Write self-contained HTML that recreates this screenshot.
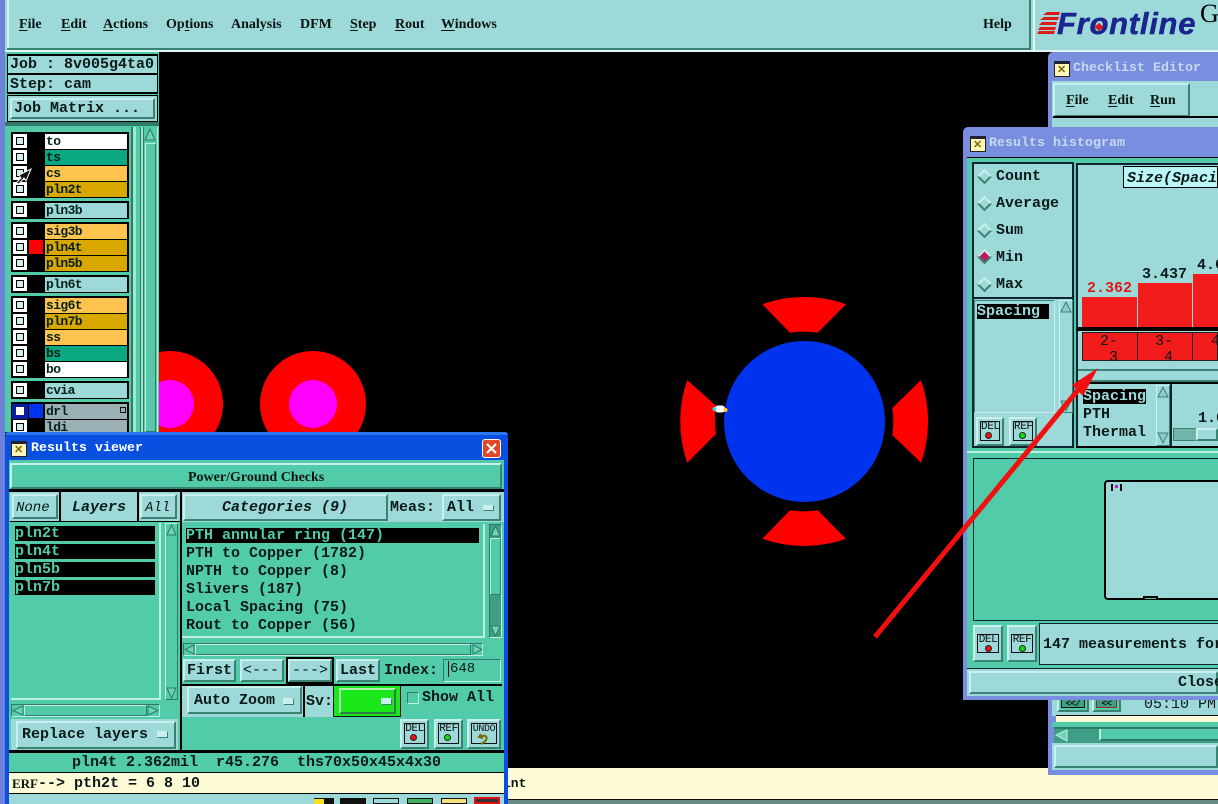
<!DOCTYPE html>
<html><head><meta charset="utf-8"><style>
html,body{margin:0;padding:0;width:1218px;height:804px;overflow:hidden;background:#000}
div,span{position:absolute;box-sizing:border-box}
.t{white-space:pre;font:bold 15px/18px "Liberation Mono",monospace;color:#0a1a18;height:18px}
.s{white-space:pre;font:bold 14px/18px "Liberation Serif",serif;color:#0a1510;height:18px}
.s u,.t u{position:static;text-underline-offset:2px}
.l{background:#9dd9d9}.g{background:#52cca8}.k{background:#000}
.b{background:#9dd9d9;border:2px solid;border-color:#c8f0ec #3a8272 #3a8272 #c8f0ec}
.r{height:15px;left:45px;width:82px;font:bold 13px/16px "Liberation Mono",monospace;letter-spacing:-.6px;color:#052018;padding-left:1px;white-space:pre}
.c{left:13px;width:14px;height:14px;border:3px solid #fff;background:#000}
.c:after{content:"";position:absolute;left:1px;top:1px;width:6px;height:6px;background:#d0eeee}
.gr{left:11px;width:118px;background:#000}
.ic{border:2px solid;border-color:#c8f0ec #3a8272 #3a8272 #c8f0ec;background:#9dd9d9}
.ic i{position:absolute;left:2px;top:2px;right:2px;bottom:3px;border:1px solid #111;font:normal 11px/11px "Liberation Mono",monospace;letter-spacing:-.4px;text-align:center;color:#111;display:block;overflow:hidden}
.dot{width:7px;height:7px;border-radius:50%;border:1px solid #222}
.dia{width:11px;height:11px;transform:rotate(45deg);background:#9dd9d9;border:2px solid;border-color:#c8f0ec #3a8272 #3a8272 #c8f0ec}
</style></head><body>

<!-- desktop left strip and top bar -->
<div style="left:0;top:0;width:5px;height:804px;background:#6f80d8"></div>
<div class="l" style="left:5px;top:0;width:1213px;height:52px"></div>
<div style="left:7px;top:0;width:2px;height:48px;background:#d8f4f2"></div>
<div style="left:7px;top:48px;width:1024px;height:2px;background:#3a8272"></div>
<div style="left:5px;top:50px;width:1213px;height:2px;background:#e4f6f4"></div>
<div style="left:1029px;top:0;width:2px;height:50px;background:#3a8272"></div>
<div style="left:1033px;top:0;width:2px;height:50px;background:#e4f6f4"></div>

<div class="s" style="left:19px;top:16px"><u>F</u>ile</div>
<div class="s" style="left:61px;top:16px"><u>E</u>dit</div>
<div class="s" style="left:103px;top:16px"><u>A</u>ctions</div>
<div class="s" style="left:166px;top:16px">Op<u>t</u>ions</div>
<div class="s" style="left:231px;top:16px">Analysis</div>
<div class="s" style="left:300px;top:16px">DFM</div>
<div class="s" style="left:350px;top:16px"><u>S</u>tep</div>
<div class="s" style="left:395px;top:16px"><u>R</u>out</div>
<div class="s" style="left:441px;top:16px"><u>W</u>indows</div>
<div class="s" style="left:983px;top:16px">Help</div>

<!-- logo -->
<svg style="position:absolute;left:1036px;top:10px" width="30" height="28"><g fill="#e01818"><polygon points="11,2 24,2 23,5 7,5"/><polygon points="8,7 23,7 22,10 4,10"/><polygon points="6,12 21,12 20,15 3,15"/><polygon points="4,17 20,17 19,20 2,20"/><polygon points="3,21 19,21 18,24 1,24"/></g></svg>
<div style="left:1057px;top:6px;font:italic bold 31px/36px 'Liberation Sans',sans-serif;color:#1a2590;letter-spacing:.73px;white-space:pre;-webkit-text-stroke:.5px #1a2590">Frontline</div>
<div style="left:1096px;top:24px;width:6px;height:6px;background:#e01818;transform:rotate(45deg)"></div>
<div style="left:1200px;top:-1px;font:26px/30px 'Liberation Serif',serif;color:#000">G</div>

<!-- canvas shapes -->
<svg style="position:absolute;left:0;top:0" width="1218" height="804">
<circle cx="170" cy="404" r="53" fill="#f00"/><circle cx="170" cy="404" r="24" fill="#f0f"/>
<circle cx="313" cy="404" r="53" fill="#f00"/><circle cx="313" cy="404" r="24" fill="#f0f"/>
<circle cx="804.5" cy="421.5" r="80.5" fill="#0033ee"/>
<g fill="#f00">
<path d="M762.3 304.3A124.5 124.5 0 0 1 846 304.3L817.7 332.7A90 90 0 0 0 790 332.7Z"/>
<path d="M762.3 538.7A124.5 124.5 0 0 0 846 538.7L817.7 510.3A90 90 0 0 1 790 510.3Z"/>
<path d="M687.3 380A124.5 124.5 0 0 0 687.3 462.7L716 434A90 90 0 0 1 716 405.7Z"/>
<path d="M921 380A124.5 124.5 0 0 1 921 462.7L892.3 435A90 90 0 0 0 892.3 408Z"/>
</g>
<rect x="715" y="405.500" width="10" height="7" rx="3" fill="#fff"/>
<circle cx="714.500" cy="409" r="2" fill="#3dd"/><circle cx="725.500" cy="410" r="2" fill="#fc2"/>
</svg>

<!-- left panel -->
<div class="g" style="left:5px;top:52px;width:154px;height:380px"></div>
<div class="k" style="left:7px;top:54px;width:151px;height:40px"></div>
<div class="l" style="left:8px;top:56px;width:149px;height:17px"></div>
<div class="l" style="left:8px;top:75px;width:149px;height:17px"></div>
<div class="t" style="left:10px;top:56px">Job : 8v005g4ta0</div>
<div class="t" style="left:10px;top:76px">Step: cam</div>
<div class="k" style="left:7px;top:95px;width:151px;height:27px"></div>
<div class="l" style="left:8px;top:96px;width:149px;height:25px"></div>
<div class="b" style="left:10px;top:98px;width:145px;height:21px"></div>
<div class="t" style="left:14px;top:100px">Job Matrix ...</div>
<div style="left:5px;top:122px;width:154px;height:4px;background:#2f7a68"></div>

<div class="gr" style="top:132px;height:66px"></div>
<div class="gr" style="top:201px;height:18px"></div>
<div class="gr" style="top:222px;height:50px"></div>
<div class="gr" style="top:275px;height:18px"></div>
<div class="gr" style="top:296px;height:82px"></div>
<div class="gr" style="top:381px;height:18px"></div>
<div class="gr" style="top:402px;height:30px"></div>

<div class="c" style="top:134px"></div><div class="r" style="top:134px;background:#fff">to</div>
<div class="c" style="top:150px"></div><div class="r" style="top:150px;background:#0aa882">ts</div>
<div class="c" style="top:166px"></div><div class="r" style="top:166px;background:#ffc44f">cs</div>
<div class="c" style="top:182px"></div><div class="r" style="top:182px;background:#d8a800">pln2t</div>
<div class="c" style="top:203px"></div><div class="r" style="top:203px;background:#9dd9d9">pln3b</div>
<div class="c" style="top:224px"></div><div class="r" style="top:224px;background:#ffc44f">sig3b</div>
<div class="c" style="top:240px"></div><div class="r" style="top:240px;background:#d8a800">pln4t</div>
<div style="left:29px;top:240px;width:14px;height:14px;background:#f00"></div>
<div class="c" style="top:256px"></div><div class="r" style="top:256px;background:#d8a800">pln5b</div>
<div class="c" style="top:277px"></div><div class="r" style="top:277px;background:#9dd9d9">pln6t</div>
<div class="c" style="top:298px"></div><div class="r" style="top:298px;background:#ffc44f">sig6t</div>
<div class="c" style="top:314px"></div><div class="r" style="top:314px;background:#d8a800">pln7b</div>
<div class="c" style="top:330px"></div><div class="r" style="top:330px;background:#ffc44f">ss</div>
<div class="c" style="top:346px"></div><div class="r" style="top:346px;background:#0aa882">bs</div>
<div class="c" style="top:362px"></div><div class="r" style="top:362px;background:#fff">bo</div>
<div class="c" style="top:383px"></div><div class="r" style="top:383px;background:#9dd9d9">cvia</div>
<div style="left:12px;top:404px;width:16px;height:15px;background:#0a1fa0"></div>
<div style="left:16px;top:407px;width:8px;height:8px;background:#fff"></div>
<div style="left:29px;top:404px;width:14px;height:14px;background:#0033ee"></div>
<div class="r" style="top:404px;background:#9ab0b4">drl</div>
<div style="left:120px;top:407px;width:6px;height:6px;border:1px solid #111"></div>
<div class="c" style="top:420px"></div><div class="r" style="top:420px;background:#9ab0b4;height:12px">ldi</div>
<svg style="position:absolute;left:15px;top:167px" width="18" height="18"><path d="M1 16L6 11 4 8 16 2 11 14 9 11 4 17Z" fill="#111" stroke="#fff" stroke-width="1"/></svg>

<!-- left scroll strip -->
<div style="left:131px;top:127px;width:12px;height:305px;background:linear-gradient(90deg,#2f7a68 0 2px,#9fe8d0 2px 5px,#52cca8 5px 9px,#2f7a68 9px 10px,#9fe8d0 10px)"></div>
<div style="left:143px;top:127px;width:15px;height:305px;background:#52cca8;border-left:1px solid #2f7a68;border-right:1px solid #bcefe0"></div>
<div style="left:145px;top:143px;width:11px;height:289px;background:#5ac8a8;border:1px solid;border-color:#bcefe0 #2f7a68 #2f7a68 #bcefe0"></div>
<svg style="position:absolute;left:144px;top:128px" width="13" height="13"><path d="M1 12L6 1 11 12Z" fill="#6fd4b6" stroke="#2f7a68"/></svg>

<!-- bottom cream -->
<div style="left:507px;top:768px;width:711px;height:31px;background:#fffbd6"></div>
<div style="left:507px;top:799px;width:711px;height:1px;background:#111"></div>
<div style="left:507px;top:800px;width:711px;height:4px;background:#6b8c84"></div>
<div class="t" style="left:503px;top:775px;font-size:13px">int</div>

<!-- checklist window -->
<div style="left:1048px;top:52px;width:180px;height:723px;background:#7a8ee0;border-radius:5px 0 0 0"></div>
<div style="left:1054px;top:61px;width:16px;height:16px;background:#fdf6b8;border:1px solid #222;border-top:3px solid #223"></div>
<div style="left:1057px;top:66px;font:bold 11px/9px 'Liberation Sans',sans-serif;color:#7a6a00">✕</div>
<div class="t" style="left:1073px;top:60px;color:#c6d8ee;font-size:13.330px">Checklist Editor</div>
<div class="l" style="left:1052px;top:81px;width:166px;height:36px"></div>
<div class="b" style="left:1053px;top:83px;width:137px;height:34px"></div>
<div class="k" style="left:1053px;top:116px;width:165px;height:2px"></div>
<div class="s" style="left:1066px;top:92px"><u>F</u>ile</div>
<div class="s" style="left:1108px;top:92px"><u>E</u>dit</div>
<div class="s" style="left:1150px;top:92px"><u>R</u>un</div>
<div class="l" style="left:1052px;top:118px;width:166px;height:14px"></div>
<div class="l" style="left:1052px;top:695px;width:166px;height:21px"></div>
<div class="ic" style="left:1057px;top:696px;width:32px;height:16px;background:#52cca8"><i style="left:2px;top:0;right:2px;bottom:2px;background:#3e9f85;font:bold 9px/10px 'Liberation Mono',monospace">&lt;&lt;/</i></div>
<div class="ic" style="left:1092px;top:696px;width:29px;height:16px;background:#52cca8"><i style="left:2px;top:0;right:2px;bottom:2px;background:#3e9f85;border-color:#a22;font:bold 9px/10px 'Liberation Mono',monospace">&lt;&lt;</i></div>
<div class="t" style="left:1144px;top:696px;font-weight:normal">05:10 PM</div>
<div style="left:1056px;top:715px;width:162px;height:1px;background:#111"></div>
<div style="left:1056px;top:716px;width:162px;height:6px;background:#fffbd6"></div>
<div style="left:1052px;top:722px;width:166px;height:5px;background:#52cca8"></div>
<div style="left:1054px;top:727px;width:164px;height:16px;background:#3e9f85;border-top:2px solid #2f7a68"></div>
<div style="left:1099px;top:729px;width:119px;height:12px;background:#52cca8;border-left:2px solid #bcefe0;border-bottom:2px solid #2f7a68"></div>
<svg style="position:absolute;left:1055px;top:729px" width="13" height="13"><path d="M12 1L1 6 12 12Z" fill="#6fd4b6" stroke="#bcefe0"/></svg>
<div class="l" style="left:1052px;top:743px;width:166px;height:27px"></div>
<div class="b" style="left:1054px;top:745px;width:164px;height:23px"></div>

<!-- histogram window -->
<div style="left:963px;top:127px;width:255px;height:573px;background:#7a8ee0;border-radius:5px 0 0 0"></div>
<div style="left:970px;top:136px;width:16px;height:16px;background:#fdf6b8;border:1px solid #222;border-top:3px solid #223"></div>
<div style="left:973px;top:141px;font:bold 11px/9px 'Liberation Sans',sans-serif;color:#7a6a00">✕</div>
<div class="t" style="left:989px;top:135px;color:#c6d8ee;font-size:13.330px">Results histogram</div>
<div class="g" style="left:967px;top:157px;width:251px;height:294px"></div>
<div class="k" style="left:967px;top:157px;width:251px;height:1px"></div>
<div class="l" style="left:972px;top:162px;width:102px;height:286px;border:2px solid #123"></div>
<div style="left:974px;top:297px;width:98px;height:2px;background:#123"></div>
<div class="t" style="left:996px;top:168px">Count</div>
<div class="t" style="left:996px;top:195px">Average</div>
<div class="t" style="left:996px;top:222px">Sum</div>
<div class="t" style="left:996px;top:249px">Min</div>
<div class="t" style="left:996px;top:276px">Max</div>
<div class="dia" style="left:979px;top:171px"></div>
<div class="dia" style="left:979px;top:198px"></div>
<div class="dia" style="left:979px;top:225px"></div>
<div class="dia" style="left:979px;top:251px;background:#b81a5a"></div>
<div class="dia" style="left:979px;top:279px"></div>
<!-- left list -->
<div style="left:974px;top:300px;width:81px;height:113px;border:1px solid;border-color:#3a8272 #c8f0ec #c8f0ec #3a8272"></div>
<div class="k" style="left:977px;top:304px;width:72px;height:15px"></div>
<div class="t" style="left:977px;top:303px;color:#9dd9d9">Spacing</div>
<div style="left:1059px;top:300px;width:14px;height:113px;background:#9dd9d9;border:1px solid;border-color:#c8f0ec #3a8272 #3a8272 #c8f0ec"></div>
<svg style="position:absolute;left:1060px;top:301px" width="12" height="12"><path d="M1 11L6 1 11 11Z" fill="#8ccccc" stroke="#3a8272"/></svg>
<svg style="position:absolute;left:1060px;top:400px" width="12" height="12"><path d="M1 1L6 11 11 1Z" fill="#8ccccc" stroke="#3a8272"/></svg>
<div class="ic" style="left:976px;top:417px;width:28px;height:29px"><i>DEL</i></div><div class="dot" style="left:985px;top:432px;background:#f01010"></div>
<div class="ic" style="left:1009px;top:417px;width:28px;height:29px"><i>REF</i></div><div class="dot" style="left:1019px;top:432px;background:#10e010"></div>
<!-- chart -->
<div class="l" style="left:1076px;top:163px;width:142px;height:285px;border-left:2px solid #123;border-top:2px solid #123"></div>
<div style="left:1123px;top:166px;width:95px;height:22px;background:#baf6f6;border:1px solid #000"></div>
<div style="left:1127px;top:170px;white-space:pre;font:italic bold 15px/18px 'Liberation Mono',monospace;color:#0a1a18">Size(Spaci</div>
<div style="left:1082px;top:297px;width:55px;height:30px;background:#f21c1c"></div>
<div style="left:1138px;top:283px;width:54px;height:44px;background:#f21c1c"></div>
<div style="left:1193px;top:274px;width:25px;height:53px;background:#f21c1c"></div>
<div class="t" style="left:1087px;top:280px;color:#e01818">2.362</div>
<div class="t" style="left:1142px;top:266px">3.437</div>
<div class="t" style="left:1197px;top:257px">4.6</div>
<div class="k" style="left:1077px;top:327px;width:141px;height:4px"></div>
<div style="left:1082px;top:332px;width:136px;height:29px;background:#f21c1c;border:1px solid #222"></div>
<div style="left:1137px;top:332px;width:1px;height:29px;background:#222"></div>
<div style="left:1192px;top:332px;width:1px;height:29px;background:#222"></div>
<div class="t" style="left:1100px;top:333px;font-weight:normal">2-</div>
<div class="t" style="left:1155px;top:333px;font-weight:normal">3-</div>
<div class="t" style="left:1211px;top:333px;font-weight:normal">4</div>
<div class="t" style="left:1109px;top:349px;font-weight:normal">3</div>
<div class="t" style="left:1164px;top:349px;font-weight:normal">4</div>
<div style="left:1078px;top:369px;width:140px;height:13px;background:#9dd9d9;border-top:2px solid #3a8272;border-bottom:2px solid #3a8272"></div>
<div class="k" style="left:1077px;top:382px;width:141px;height:2px"></div>
<div class="k" style="left:1076px;top:446px;width:142px;height:2px"></div>
<div class="k" style="left:1083px;top:389px;width:63px;height:15px"></div>
<div class="t" style="left:1083px;top:388px;color:#9dd9d9">Spacing</div>
<div class="t" style="left:1083px;top:406px">PTH</div>
<div class="t" style="left:1083px;top:424px">Thermal</div>
<div style="left:1156px;top:385px;width:14px;height:61px;background:#9dd9d9;border:1px solid;border-color:#c8f0ec #3a8272 #3a8272 #c8f0ec"></div>
<svg style="position:absolute;left:1157px;top:386px" width="12" height="12"><path d="M1 11L6 1 11 11Z" fill="#8ccccc" stroke="#3a8272"/></svg>
<svg style="position:absolute;left:1157px;top:432px" width="12" height="12"><path d="M1 1L6 11 11 1Z" fill="#8ccccc" stroke="#3a8272"/></svg>
<div style="left:1170px;top:384px;width:2px;height:62px;background:#123"></div>
<div class="t" style="left:1198px;top:410px">1.0</div>
<div style="left:1173px;top:428px;width:45px;height:13px;background:#6fb5aa;border:1px solid #3a8272"></div>
<div class="b" style="left:1196px;top:428px;width:22px;height:13px"></div>
<!-- lower canvas area -->
<div class="g" style="left:967px;top:451px;width:251px;height:217px"></div>
<div style="left:967px;top:451px;width:251px;height:2px;background:#bcefe0"></div>
<div style="left:973px;top:458px;width:245px;height:163px;border:1px solid #123;border-right:0"></div>
<div class="l" style="left:1104px;top:480px;width:114px;height:120px;border:2px solid #000;border-right:0;border-radius:4px 0 0 4px"></div>
<div style="left:1143px;top:596px;width:15px;height:3px;background:#52cca8;border:2px solid #000;border-bottom:0"></div>
<div style="left:1111px;top:484px;width:11px;height:7px;border-left:2px dashed #111;border-right:2px dashed #111"></div>
<div style="left:1115px;top:485px;width:3px;height:3px;background:#c020d0"></div>
<div class="ic" style="left:973px;top:625px;width:30px;height:37px"><i style="top:7px;bottom:7px">DEL</i></div><div class="dot" style="left:985px;top:645px;background:#f01010"></div>
<div class="ic" style="left:1007px;top:625px;width:30px;height:37px"><i style="top:7px;bottom:7px">REF</i></div><div class="dot" style="left:1019px;top:645px;background:#10e010"></div>
<div class="l" style="left:1039px;top:623px;width:179px;height:42px;border:1px solid #123;border-right:0"></div>
<div class="t" style="left:1043px;top:636px">147 measurements for</div>
<div class="l" style="left:967px;top:668px;width:251px;height:28px;border-top:1px solid #123"></div>
<div class="b" style="left:969px;top:671px;width:249px;height:23px"></div>
<div class="t" style="left:1178px;top:674px">Close</div>

<!-- results viewer window -->
<div style="left:5px;top:432px;width:503px;height:372px;background:#0a50e0;border-radius:6px 6px 0 0"></div>
<div style="left:5px;top:432px;width:503px;height:3px;background:#2a78f0;border-radius:6px 6px 0 0"></div>
<div style="left:11px;top:441px;width:16px;height:16px;background:#fdf6b8;border:1px solid #222;border-top:3px solid #223"></div>
<div style="left:14px;top:446px;font:bold 11px/9px 'Liberation Sans',sans-serif;color:#7a6a00">✕</div>
<div class="t" style="left:31px;top:440px;color:#fff;font-size:13.330px">Results viewer</div>
<div style="left:482px;top:439px;width:19px;height:19px;background:#e0482a;border:1px solid #fff;border-radius:3px"></div>
<svg style="position:absolute;left:482px;top:439px" width="19" height="19"><path d="M5 5L14 14M14 5L5 14" stroke="#fff" stroke-width="2"/></svg>

<div class="g" style="left:9px;top:460px;width:495px;height:344px"></div>
<div class="b" style="left:10px;top:463px;width:492px;height:26px;background:#52cca8"></div>
<div class="s" style="left:188px;top:469px">Power/Ground Checks</div>
<div class="k" style="left:9px;top:489px;width:495px;height:3px"></div>
<!-- layers column -->
<div class="l" style="left:10px;top:492px;width:170px;height:29px"></div>
<div class="b" style="left:12px;top:494px;width:46px;height:25px"></div>
<div class="t" style="left:16px;top:499px;font-style:italic;font-weight:normal;font-size:14px">None</div>
<div class="k" style="left:59px;top:492px;width:2px;height:29px"></div>
<div class="k" style="left:137px;top:492px;width:2px;height:29px"></div>
<div class="t" style="left:72px;top:499px;font-style:italic">Layers</div>
<div class="b" style="left:140px;top:494px;width:37px;height:25px"></div>
<div class="t" style="left:145px;top:499px;font-style:italic;font-weight:normal;font-size:14px">All</div>
<div class="k" style="left:10px;top:521px;width:170px;height:1px"></div>
<div style="left:11px;top:523px;width:150px;height:177px;border-right:2px solid #bcefe0;border-bottom:2px solid #bcefe0"></div>
<div class="k" style="left:15px;top:526px;width:140px;height:15px"></div>
<div class="k" style="left:15px;top:544px;width:140px;height:15px"></div>
<div class="k" style="left:15px;top:562px;width:140px;height:15px"></div>
<div class="k" style="left:15px;top:580px;width:140px;height:15px"></div>
<div class="t" style="left:15px;top:525px;color:#52cca8">pln2t</div>
<div class="t" style="left:15px;top:543px;color:#52cca8">pln4t</div>
<div class="t" style="left:15px;top:561px;color:#52cca8">pln5b</div>
<div class="t" style="left:15px;top:579px;color:#52cca8">pln7b</div>
<div style="left:165px;top:523px;width:13px;height:177px;background:#52cca8;border:1px solid;border-color:#bcefe0 #2f7a68 #2f7a68 #bcefe0"></div>
<svg style="position:absolute;left:166px;top:524px" width="11" height="12"><path d="M1 11L5.500 1 10 11Z" fill="#6fd4b6" stroke="#2f7a68"/></svg>
<svg style="position:absolute;left:166px;top:687px" width="11" height="12"><path d="M1 1L5.500 11 10 1Z" fill="#6fd4b6" stroke="#2f7a68"/></svg>
<div style="left:11px;top:704px;width:149px;height:13px;background:#52cca8;border:1px solid;border-color:#2f7a68 #bcefe0 #bcefe0 #2f7a68"></div>
<div style="left:24px;top:705px;width:123px;height:11px;border:1px solid;border-color:#bcefe0 #2f7a68 #2f7a68 #bcefe0"></div>
<svg style="position:absolute;left:12px;top:705px" width="12" height="11"><path d="M11 1L1 5.500 11 10Z" fill="#6fd4b6" stroke="#2f7a68"/></svg>
<svg style="position:absolute;left:147px;top:705px" width="12" height="11"><path d="M1 1L11 5.500 1 10Z" fill="#6fd4b6" stroke="#2f7a68"/></svg>
<div class="l" style="left:11px;top:719px;width:167px;height:31px"></div>
<div class="b" style="left:16px;top:721px;width:160px;height:28px"></div>
<div class="t" style="left:22px;top:726px">Replace layers</div>
<div class="b" style="left:157px;top:731px;width:11px;height:7px;background:#c8f0ec;border-width:1px"></div>
<div class="k" style="left:180px;top:492px;width:2px;height:260px"></div>
<!-- categories column -->
<div class="l" style="left:182px;top:492px;width:322px;height:30px"></div>
<div class="b" style="left:183px;top:494px;width:205px;height:27px"></div>
<div class="t" style="left:222px;top:499px;font-style:italic">Categories (9)</div>
<div class="t" style="left:390px;top:499px">Meas:</div>
<div class="b" style="left:442px;top:494px;width:59px;height:27px"></div>
<div class="t" style="left:447px;top:499px">All</div>
<div class="b" style="left:483px;top:505px;width:11px;height:6px;background:#c8f0ec;border-width:1px"></div>
<div class="g" style="left:182px;top:522px;width:322px;height:137px"></div>
<div style="left:182px;top:524px;width:303px;height:114px;border-right:2px solid #bcefe0;border-bottom:2px solid #bcefe0"></div>
<div class="k" style="left:186px;top:528px;width:293px;height:15px"></div>
<div class="t" style="left:186px;top:527px;color:#52cca8">PTH annular ring (147)</div>
<div class="t" style="left:186px;top:545px">PTH to Copper (1782)</div>
<div class="t" style="left:186px;top:563px">NPTH to Copper (8)</div>
<div class="t" style="left:186px;top:581px">Slivers (187)</div>
<div class="t" style="left:186px;top:599px">Local Spacing (75)</div>
<div class="t" style="left:186px;top:617px">Rout to Copper (56)</div>
<div style="left:489px;top:524px;width:13px;height:114px;background:#3e9f85;border:1px solid;border-color:#2f7a68 #bcefe0 #bcefe0 #2f7a68"></div>
<div style="left:490px;top:538px;width:11px;height:57px;background:#52cca8;border:1px solid;border-color:#bcefe0 #2f7a68 #2f7a68 #bcefe0"></div>
<svg style="position:absolute;left:490px;top:525px" width="11" height="12"><path d="M1 11L5.500 1 10 11Z" fill="#6fd4b6" stroke="#2f7a68"/></svg>
<svg style="position:absolute;left:490px;top:625px" width="11" height="12"><path d="M1 1L5.500 11 10 1Z" fill="#6fd4b6" stroke="#2f7a68"/></svg>
<div style="left:183px;top:643px;width:300px;height:13px;background:#52cca8;border:1px solid;border-color:#2f7a68 #bcefe0 #bcefe0 #2f7a68"></div>
<div style="left:195px;top:644px;width:276px;height:11px;border:1px solid;border-color:#bcefe0 #2f7a68 #2f7a68 #bcefe0"></div>
<svg style="position:absolute;left:184px;top:644px" width="11" height="11"><path d="M10 1L1 5.500 10 10Z" fill="#6fd4b6" stroke="#2f7a68"/></svg>
<svg style="position:absolute;left:472px;top:644px" width="11" height="11"><path d="M1 1L10 5.500 1 10Z" fill="#6fd4b6" stroke="#2f7a68"/></svg>
<div class="b" style="left:183px;top:659px;width:53px;height:23px"></div>
<div class="t" style="left:187px;top:662px">First</div>
<div class="b" style="left:240px;top:659px;width:44px;height:23px"></div>
<div class="t" style="left:243px;top:662px;font-weight:normal">&lt;---</div>
<div class="k" style="left:286px;top:657px;width:48px;height:27px"></div>
<div class="b" style="left:288px;top:659px;width:44px;height:23px"></div>
<div class="t" style="left:292px;top:662px;font-weight:normal">---&gt;</div>
<div class="b" style="left:336px;top:659px;width:44px;height:23px"></div>
<div class="t" style="left:340px;top:662px">Last</div>
<div class="t" style="left:384px;top:662px">Index:</div>
<div style="left:443px;top:659px;width:58px;height:23px;border:1px solid;border-color:#2f7a68 #bcefe0 #bcefe0 #2f7a68;background:#52cca8"></div>
<div style="left:448px;top:661px;width:1px;height:16px;background:#111"></div>
<div class="t" style="left:450px;top:660px;font-size:14px;font-weight:normal">648</div>
<div class="k" style="left:181px;top:684px;width:321px;height:2px"></div>
<div class="l" style="left:182px;top:686px;width:128px;height:31px"></div>
<div class="b" style="left:187px;top:686px;width:115px;height:28px"></div>
<div class="t" style="left:194px;top:692px">Auto Zoom</div>
<div class="b" style="left:283px;top:698px;width:11px;height:7px;background:#c8f0ec;border-width:1px"></div>
<div class="k" style="left:303px;top:686px;width:2px;height:31px"></div>
<div class="l" style="left:305px;top:686px;width:28px;height:31px"></div>
<div class="t" style="left:306px;top:693px">Sv:</div>
<div style="left:333px;top:685px;width:68px;height:32px;background:#1ae81a;border:1px solid #111"></div>
<div style="left:339px;top:688px;width:57px;height:26px;background:#1ae81a;border:2px solid;border-color:#b0f0b0 #2f7a48 #2f7a48 #b0f0b0"></div>
<div class="b" style="left:381px;top:698px;width:11px;height:7px;background:#c8f0ec;border-width:1px"></div>
<div style="left:407px;top:692px;width:12px;height:12px;border:1px solid;border-color:#2f7a68 #bcefe0 #bcefe0 #2f7a68"></div>
<div class="t" style="left:422px;top:689px">Show All</div>
<div class="ic" style="left:400px;top:719px;width:29px;height:30px"><i>DEL</i></div><div class="dot" style="left:410px;top:734px;background:#f01010"></div>
<div class="ic" style="left:434px;top:719px;width:29px;height:30px"><i>REF</i></div><div class="dot" style="left:444px;top:734px;background:#10e010"></div>
<div class="ic" style="left:467px;top:719px;width:34px;height:30px"><i style="font-size:10px">UNDO</i></div>
<svg style="position:absolute;left:477px;top:733px" width="14" height="13"><path d="M4 1L2 4 6 5M3 4C8 1 11 4 9 7 8 9 6 10 4 11" fill="none" stroke="#7a6a00" stroke-width="2"/></svg>
<!-- status -->
<div class="k" style="left:9px;top:750px;width:495px;height:3px"></div>
<div class="g" style="left:9px;top:753px;width:495px;height:19px"></div>
<div class="t" style="left:72px;top:754px">pln4t 2.362mil  r45.276  ths70x50x45x4x30</div>
<div class="k" style="left:9px;top:772px;width:495px;height:1px"></div>
<div style="left:9px;top:773px;width:495px;height:20px;background:#fffbd6"></div>
<div class="k" style="left:9px;top:793px;width:495px;height:1px"></div>
<div class="s" style="left:12px;top:775px;font-size:13px">ERF</div>
<div class="t" style="left:38px;top:775px">--&gt; pth2t = 6 8 10</div>
<div class="l" style="left:9px;top:794px;width:495px;height:10px"></div>
<div style="left:304px;top:798px;width:30px;height:6px;background:#111;border-left:10px solid #9dd9d9"></div>
<div style="left:314px;top:799px;width:10px;height:5px;background:#f8e020"></div>
<div style="left:340px;top:798px;width:26px;height:6px;background:#111"></div>
<div style="left:373px;top:798px;width:26px;height:6px;background:#9dd9d9;border:1px solid #111"></div>
<div style="left:407px;top:798px;width:26px;height:6px;background:#40b060;border:1px solid #111"></div>
<div style="left:441px;top:798px;width:26px;height:6px;background:#f0e080;border:1px solid #111"></div>
<div style="left:474px;top:797px;width:26px;height:7px;background:#333;border:2px solid #e01010"></div>

<!-- red annotation arrow -->
<svg style="position:absolute;left:0;top:0" width="1218" height="804"><path d="M875 637L1078 390" stroke="#f01010" stroke-width="5" fill="none"/><polygon points="1098,368 1072,385 1083,396" fill="#f01010"/></svg>
</body></html>
